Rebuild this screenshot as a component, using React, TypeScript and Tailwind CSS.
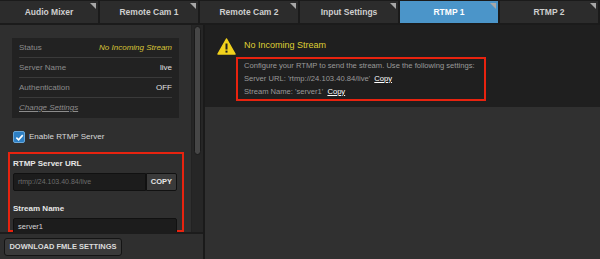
export default function App() {
  const tabs = ["Audio Mixer", "Remote Cam 1", "Remote Cam 2", "Input Settings", "RTMP 1", "RTMP 2"];

  return (
    <div className="flex h-[259px] w-[600px] flex-col overflow-hidden bg-[#1b1b1b] font-['Liberation_Sans',Arial,sans-serif]">
      {/* tab bar */}
      <div className="flex h-[29px] gap-[2px] pt-[1px] pb-[2px]">
        {tabs.map((t) => {
          const active = t === "RTMP 1";
          return (
            <div
              key={t}
              className={
                active
                  ? "relative flex w-[98px] items-center justify-center bg-[#4b95c9] text-[8.5px] font-bold text-white"
                  : "relative flex w-[98px] items-center justify-center bg-[#2c2c2c] text-[8.5px] font-bold text-[#cfcfcf]"
              }
            >
              {t}
              <span className="absolute right-[2px] top-[2px] h-0 w-0 border-l-[6px] border-t-[6px] border-l-transparent border-t-[#a8a8a8]" />
            </div>
          );
        })}
      </div>

      <div className="flex flex-1">
        {/* left panel */}
        <div className="flex w-[203px] flex-col bg-[#2f2f2f]">
          <div className="flex flex-1 overflow-hidden">
            <div className="flex w-[191px] flex-col pt-[13px]">
              <div className="mx-[12px] flex flex-col bg-[#222222] px-[7px] text-[8px] text-[#8c8c8c]">
                <Row label="Status" value={<span className="italic text-[#d8c437]">No Incoming Stream</span>} />
                <Row label="Server Name" value={<span className="text-[#e0e0e0]">live</span>} />
                <Row label="Authentication" value={<span className="text-[#e0e0e0]">OFF</span>} />
                <div className="flex h-[20px] items-center">
                  <span className="italic underline">Change Settings</span>
                </div>
              </div>

              <div className="ml-[13px] mt-[13px] flex items-center gap-[4px]">
                <span className="flex h-[12px] w-[12px] items-center justify-center rounded-[2px] border border-[#6aa7d8] bg-[#2d7fc4]">
                  <svg width="9" height="9" viewBox="0 0 10 10">
                    <path d="M1.5 5.2 L4 7.6 L8.6 2.4" fill="none" stroke="white" strokeWidth="1.8" />
                  </svg>
                </span>
                <span className="text-[8px] text-[#d8d8d8]">Enable RTMP Server</span>
              </div>

              <div className="ml-[8px] mt-[9px] h-[80px] w-[176px] border-2 border-[#e8230f] px-[3px] pt-[4px]">
                <div className="text-[8px] font-bold text-[#e6e6e6]">RTMP Server URL</div>
                <div className="mt-[3px] flex h-[18px] w-[164px]">
                  <div className="flex flex-1 items-center rounded-l-[2px] border border-[#111] bg-[#1c1c1c] pl-[4px] text-[7px] text-[#6d6d6d]">
                    rtmp://24.103.40.84/live
                  </div>
                  <div className="flex w-[31px] items-center justify-center rounded-r-[2px] border border-[#111] bg-[#3a3a3a] text-[7.5px] font-bold text-[#e6e6e6]">
                    COPY
                  </div>
                </div>
                <div className="mt-[12px] text-[8px] font-bold text-[#e6e6e6]">Stream Name</div>
                <div className="mt-[3px] flex h-[18px] w-[164px] items-center rounded-[2px] border border-[#111] bg-[#1c1c1c] pl-[4px] text-[7.5px] text-[#d6d6d6]">
                  server1
                </div>
              </div>
            </div>
            {/* scrollbar */}
            <div className="flex w-[12px] justify-center border-l border-[#222] bg-[#262626] pt-[1px]">
              <div className="h-[129px] w-[7px] rounded-full border border-[#1a1a1a] bg-[#464646]" />
            </div>
          </div>
          <div className="flex h-[27px] items-center border-t-2 border-[#1c1c1c] pl-[4px]">
            <div className="flex h-[18px] w-[118px] items-center justify-center rounded-[3px] border border-[#141414] bg-[#3a3a3a] text-[7.5px] font-bold text-[#dcdcdc]">
              DOWNLOAD FMLE SETTINGS
            </div>
          </div>
        </div>

        {/* right panel */}
        <div className="flex flex-1 flex-col border-l-2 border-[#1a1a1a]">
          <div className="flex h-[82px] gap-[8px] bg-[#1f1f1f] pl-[12px] pt-[12px]">
            <svg width="19" height="17" viewBox="0 0 19 17" className="mt-[1px]">
              <path d="M9.5 1 L18 16 L1 16 Z" fill="#f2d21c" stroke="#f2d21c" strokeWidth="1.5" strokeLinejoin="round" />
              <rect x="8.5" y="5.5" width="2" height="6" fill="#1f1f1f" />
              <rect x="8.5" y="12.6" width="2" height="2" fill="#1f1f1f" />
            </svg>
            <div className="flex flex-col">
              <div className="pt-[2px] text-[9px] text-[#dfd035]">No Incoming Stream</div>
              <div className="-ml-[8px] mt-[4px] flex h-[44px] w-[250px] flex-col justify-center gap-[3px] whitespace-nowrap border-2 border-[#e8230f] px-[6px] text-[7.6px] leading-[10px] text-[#9a9a9a]">
                <span>Configure your RTMP to send the stream. Use the following settings:</span>
                <span>
                  Server URL: &apos;rtmp://24.103.40.84/live&apos;{" "}
                  <span className="ml-[2px] text-white underline">Copy</span>
                </span>
                <span>
                  Stream Name: &apos;server1&apos;{" "}
                  <span className="ml-[2px] text-white underline">Copy</span>
                </span>
              </div>
            </div>
          </div>
          <div className="flex-1 bg-[#303030]" />
        </div>
      </div>
    </div>
  );
}

function Row({ label, value }: { label: string; value: React.ReactNode }) {
  return (
    <div className="flex h-[20px] items-center justify-between border-b border-[#3a3a3a]">
      <span>{label}</span>
      {value}
    </div>
  );
}
